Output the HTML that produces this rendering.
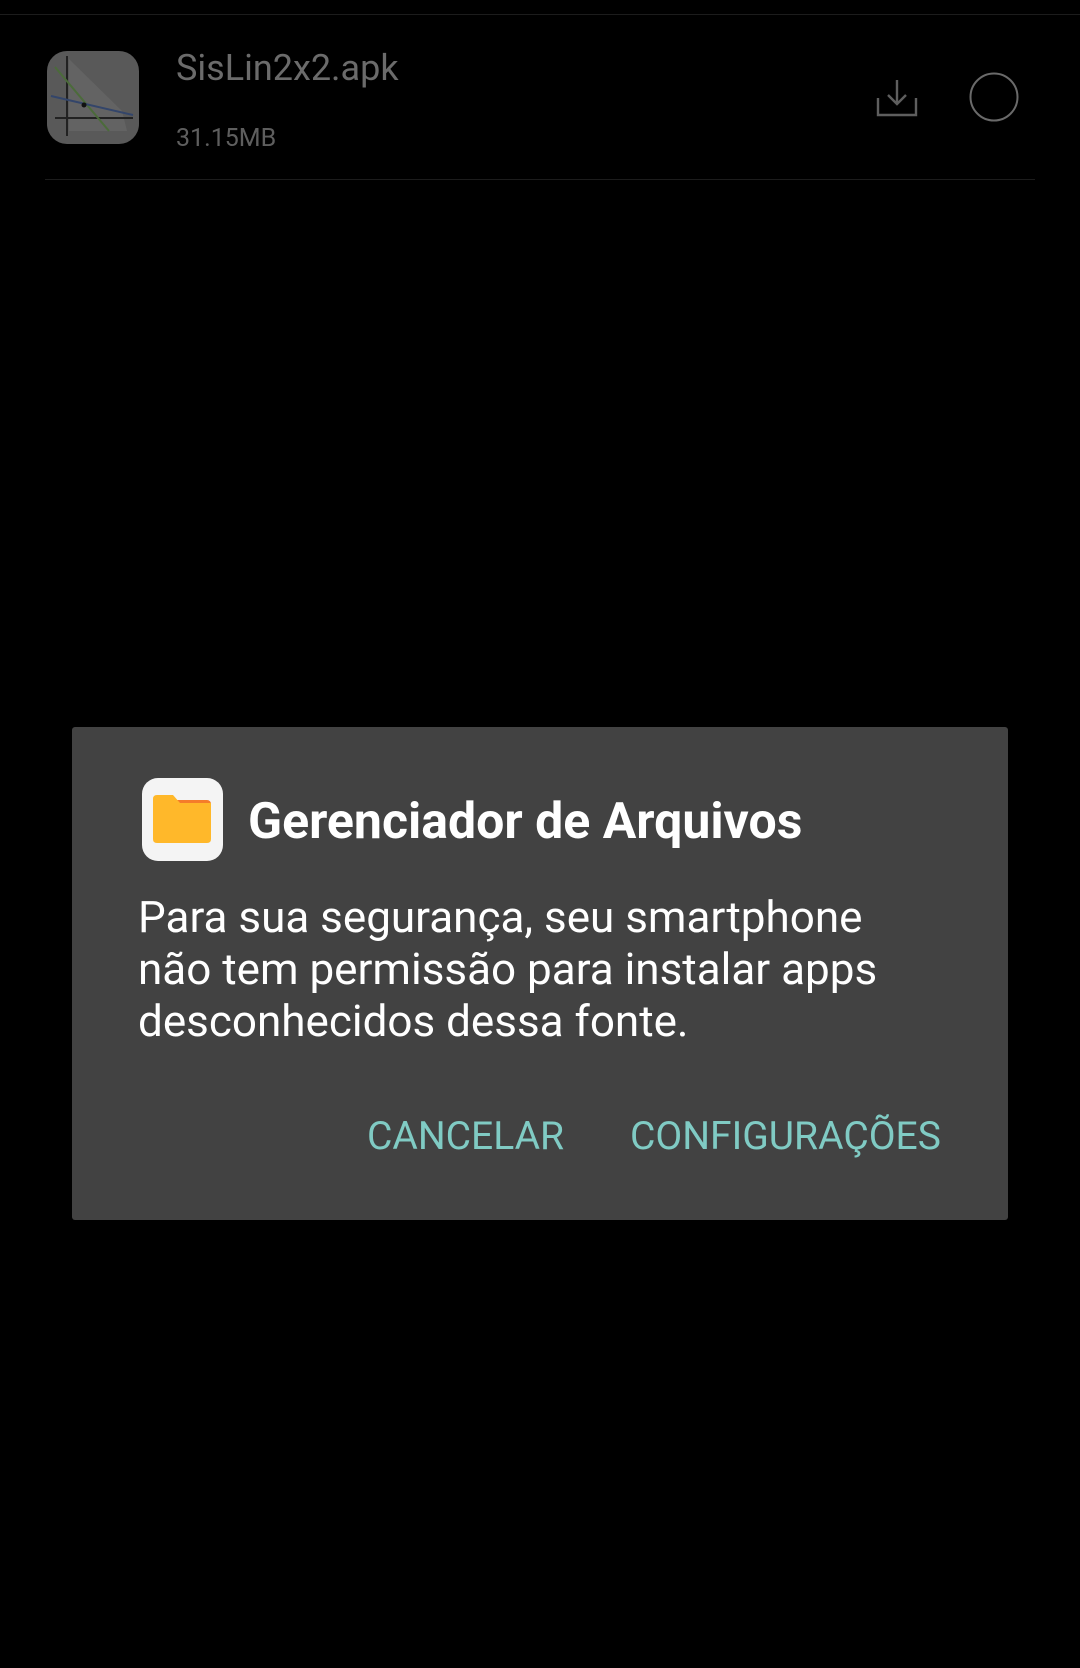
<!DOCTYPE html>
<html><head><meta charset="utf-8"><style>
html,body{margin:0;padding:0;background:#000;width:1080px;height:1668px;overflow:hidden;font-family:"Roboto","Liberation Sans",sans-serif;}
.abs{position:absolute;}
</style></head><body>
<div class="abs" style="left:0;top:14px;width:1080px;height:1px;background:#1c1c1c"></div>
<div class="abs" style="left:47px;top:51px;width:92px;height:93px;border-radius:20px;background:#595959;overflow:hidden">
<svg width="92" height="93" viewBox="0 0 92 93">
<polygon points="22,8 75,60 80,80 22,80" fill="#636363"/>
<line x1="20" y1="5" x2="20" y2="85" stroke="#222" stroke-width="2"/>
<line x1="8" y1="67" x2="86" y2="67" stroke="#222" stroke-width="2"/>
<line x1="8" y1="16" x2="62" y2="80" stroke="#4b6b3a" stroke-width="2"/>
<line x1="4" y1="45" x2="86" y2="64" stroke="#33456a" stroke-width="2"/>
<circle cx="37" cy="54" r="2.5" fill="#111"/>
</svg></div>
<div class="abs" style="left:176px;top:47px;font-size:36px;color:#6b6b6b">SisLin2x2.apk</div>
<div class="abs" style="left:176px;top:124px;font-size:25px;color:#5e5e5e">31.15MB</div>
<svg class="abs" style="left:876px;top:79px" width="42" height="40" viewBox="0 0 42 40">
<path d="M2 19 V36 H40 V19 M21 1 V25 M12 16 L21 25 L30 16" fill="none" stroke="#5e5e5e" stroke-width="2.4"/>
</svg>
<svg class="abs" style="left:968px;top:71px" width="52" height="52"><circle cx="26" cy="26" r="23.5" fill="none" stroke="#6a6a6a" stroke-width="2"/></svg>
<div class="abs" style="left:45px;top:179px;width:990px;height:1px;background:#1c1c1c"></div>

<div class="abs" style="left:72px;top:727px;width:936px;height:493px;background:#424242;border-radius:3px"></div>
<div class="abs" style="left:142px;top:778px;width:81px;height:83px;border-radius:16px;background:#f4f4f4"></div>
<svg class="abs" style="left:153px;top:795px" width="60" height="50" viewBox="0 0 60 50">
<rect x="20" y="5" width="38" height="40" rx="4" fill="#f57c2a"/>
<rect x="22" y="9" width="34" height="36" fill="#fff4dc"/>
<path d="M0 4 Q0 0 4 0 H20 L27 8 H58 V44 Q58 48 54 48 H4 Q0 48 0 44 Z" fill="#ffb82a"/>
</svg>
<div class="abs" style="left:248px;top:793px;font-size:50px;font-weight:bold;color:#fff;white-space:nowrap">Gerenciador de Arquivos</div>
<div class="abs" style="left:138px;top:891px;font-size:44px;line-height:52px;color:#fff;white-space:nowrap">Para sua segurança, seu smartphone<br>não tem permissão para instalar apps<br>desconhecidos dessa fonte.</div>
<div class="abs" style="left:367px;top:1113px;font-size:39px;color:#80cbc4">CANCELAR</div>
<div class="abs" style="left:630px;top:1113px;font-size:39px;color:#80cbc4">CONFIGURAÇÕES</div>
</body></html>
